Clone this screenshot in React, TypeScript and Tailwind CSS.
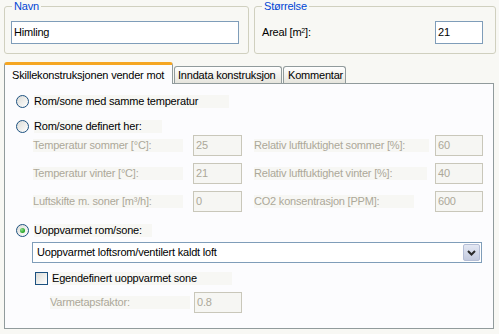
import React from "react";

const font = { fontFamily: '"Liberation Sans", Arial, sans-serif' };

function Radio({ checked }: { checked?: boolean }) {
  return (
    <div className="flex h-[13px] w-[13px] shrink-0 items-center justify-center rounded-full border border-[#1c5180] bg-gradient-to-br from-[#dcdcd7] to-white">
      {checked && (
        <div className="h-[5px] w-[5px] rounded-full bg-[radial-gradient(circle_at_35%_35%,#8de08d,#21a121_70%)]" />
      )}
    </div>
  );
}

function Checkbox() {
  return (
    <div className="h-[13px] w-[13px] shrink-0 border border-[#1c5180] bg-gradient-to-br from-[#dcdcd7] to-white" />
  );
}

function DisabledInput({ value, className }: { value: string; className?: string }) {
  return (
    <div
      className={`flex h-[21px] shrink-0 items-center border border-[#c9c7ba] bg-[#f6f6f3] pl-[2px] text-[#aca899] ${className ?? ""}`}
    >
      {value}
    </div>
  );
}

function FieldRow({
  left,
  leftValue,
  right,
  rightValue,
  rightBg,
}: {
  left: string;
  leftValue: string;
  right: string;
  rightValue: string;
  rightBg: string;
}) {
  return (
    <div className="flex h-[21px] items-center">
      <div className="ml-[17px] w-[160px] shrink-0 text-[#aca899]">
        <div className="w-[150px] whitespace-nowrap bg-[#f7f7f4]">{left}</div>
      </div>
      <DisabledInput value={leftValue} className="w-[49px]" />
      <div className="ml-[12px] w-[181px] shrink-0 text-[#aca899]">
        <div className={`whitespace-nowrap bg-[#f7f7f4] ${rightBg}`}>{right}</div>
      </div>
      <DisabledInput value={rightValue} className="w-[48px]" />
    </div>
  );
}

export default function App() {
  return (
    <div
      className="h-[334px] w-[499px] overflow-hidden bg-[#f8f8f4] pl-[4px] text-[11px] leading-[13px] tracking-[-0.2px] text-black"
      style={font}
    >
      <div className="flex gap-[5px]">
        <fieldset className="h-[54px] w-[245px] rounded-[3px] border border-[#d0d0bf]">
          <legend className="ml-[7px] px-[2px] text-[#0046d5]">Navn</legend>
          <div className="ml-[6px] mt-[8px] flex h-[23px] w-[228px] items-center border border-[#7f9db9] bg-white pl-[2px]">
            Himling
          </div>
        </fieldset>
        <fieldset className="h-[54px] w-[242px] rounded-[3px] border border-[#d0d0bf]">
          <legend className="ml-[7px] px-[2px] text-[#0046d5]">Størrelse</legend>
          <div className="mt-[8px] flex items-center justify-between pl-[7px] pr-[12px]">
            <span>
              Areal [m<sup className="text-[7px]">2</sup>]:
            </span>
            <div className="flex h-[23px] w-[48px] items-center border border-[#7f9db9] bg-white pl-[2px]">
              21
            </div>
          </div>
        </fieldset>
      </div>

      <div className="mt-[8px] flex h-[21px] items-end">
        <div className="relative z-10 mb-[-1px] flex h-[22px] w-[169px] items-center whitespace-nowrap rounded-t-[3px] border-x border-t-[3px] border-x-[#919b9c] border-t-[#f5a623] bg-[#fcfcfe] pl-[7px] pt-[1px]">
          Skillekonstruksjonen vender mot
        </div>
        <div className="ml-[1px] flex h-[17px] w-[108px] items-center whitespace-nowrap rounded-t-[3px] border-x border-t border-[#919b9c] bg-gradient-to-b from-white to-[#e6e5dd] pl-[3px]">
          Inndata konstruksjon
        </div>
        <div className="ml-[1px] flex h-[17px] w-[63px] items-center whitespace-nowrap rounded-t-[3px] border-x border-t border-[#919b9c] bg-gradient-to-b from-white to-[#e6e5dd] pl-[4px]">
          Kommentar
        </div>
      </div>

      <div className="flex h-[246px] w-[490px] flex-col border border-[#919b9c] bg-[#fcfcfe] pl-[11px] pt-[8px]">
        <div className="flex h-[18px] items-center gap-[5px]">
          <Radio />
          <div className="w-[195px] whitespace-nowrap bg-[#f7f7f4]">Rom/sone med samme temperatur</div>
        </div>
        <div className="mt-[7px] flex h-[18px] items-center gap-[5px]">
          <Radio />
          <div className="w-[128px] whitespace-nowrap bg-[#f7f7f4]">Rom/sone definert her:</div>
        </div>
        <FieldRow
          left="Temperatur sommer [°C]:"
          leftValue="25"
          right="Relativ luftfuktighet sommer [%]:"
          rightValue="60"
          rightBg="w-[175px]"
        />
        <div className="mt-[7px]">
          <FieldRow
            left="Temperatur vinter [°C]:"
            leftValue="21"
            right="Relativ luftfuktighet vinter [%]:"
            rightValue="40"
            rightBg="w-[173px]"
          />
        </div>
        <div className="mt-[7px]">
          <FieldRow
            left="Luftskifte m. soner [m³/h]:"
            leftValue="0"
            right="CO2 konsentrasjon [PPM]:"
            rightValue="600"
            rightBg="w-[160px]"
          />
        </div>
        <div className="mt-[9px] flex h-[18px] items-center gap-[5px]">
          <Radio checked />
          <div className="w-[118px] whitespace-nowrap bg-[#f7f7f4]">Uoppvarmet rom/sone:</div>
        </div>
        <div className="ml-[16px] mt-[3px] flex h-[21px] w-[450px] items-center justify-between border border-[#7f9db9] bg-white pl-[4px] pr-[1px]">
          <span>Uoppvarmet loftsrom/ventilert kaldt loft</span>
          <div className="flex h-[17px] w-[17px] items-center justify-center rounded-[2px] border border-[#b5bed6] bg-gradient-to-b from-[#e4e8f4] to-[#c3cade]">
            <svg width="9" height="6" viewBox="0 0 9 6">
              <path d="M1 1 L4.5 4.5 L8 1" fill="none" stroke="#2b2b2b" strokeWidth="2" />
            </svg>
          </div>
        </div>
        <div className="ml-[19px] mt-[6px] flex h-[18px] items-center gap-[4px]">
          <Checkbox />
          <div className="w-[180px] whitespace-nowrap bg-[#f7f7f4]">Egendefinert uoppvarmet sone</div>
        </div>
        <div className="mt-[5px] flex h-[21px] items-center">
          <div className="ml-[34px] w-[144px] shrink-0 text-[#aca899]">
            <div className="w-[140px] whitespace-nowrap bg-[#f7f7f4]">Varmetapsfaktor:</div>
          </div>
          <DisabledInput value="0.8" className="w-[48px]" />
        </div>
      </div>
    </div>
  );
}
